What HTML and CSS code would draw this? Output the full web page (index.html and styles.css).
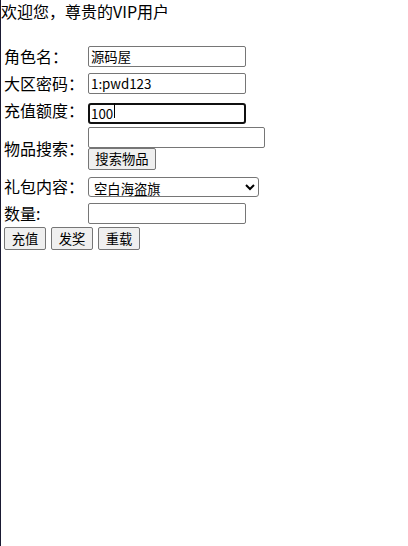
FILE: index.html
```html
<!DOCTYPE html>
<html lang="zh-CN">
<head>
<meta charset="utf-8">
<title>充值</title>
<link rel="stylesheet" href="styles.css">
</head>
<body>
<div class="welcome">欢迎您，尊贵的VIP用户</div>
<form class="form">
  <div class="row">
    <label class="label">角色名：</label>
    <input class="field" type="text" value="源码屋">
  </div>
  <div class="row">
    <label class="label">大区密码：</label>
    <input class="field" type="text" value="1:pwd123">
  </div>
  <div class="row">
    <label class="label">充值额度：</label>
    <span class="caret-wrap"><input class="field focused" type="text" value="100"><span class="caret"></span></span>
  </div>
  <div class="row row-search">
    <label class="label">物品搜索：</label>
    <div class="stack">
      <input class="field wide" type="text" value="">
      <button class="btn btn-search" type="button">搜索物品</button>
    </div>
  </div>
  <div class="row">
    <label class="label">礼包内容：</label>
    <select class="select"><option>空白海盗旗</option></select>
  </div>
  <div class="row">
    <label class="label">数量:</label>
    <input class="field" type="text" value="">
  </div>
  <div class="actions">
    <button class="btn btn-act" type="button">充值</button>
    <button class="btn btn-act" type="button">发奖</button>
    <button class="btn btn-act" type="button">重载</button>
  </div>
</form>
</body>
</html>
```
FILE: styles.css
```css
html, body {
  margin: 0;
  background: #fff;
}
body {
  box-sizing: border-box;
  min-height: 546px;
  border-left: 1px solid #1a1a33;
  font-family: "Noto Sans CJK SC", "Noto Sans", sans-serif;
  color: #000;
}
.welcome {
  font-size: 16px;
  line-height: 23px;
  height: 23px;
}
.form {
  margin: 20px 0 0 0;
  padding-left: 3px;
}
.row {
  display: flex;
  align-items: center;
  height: 27px;
}
.row-search {
  height: 49px;
}
.label {
  flex: none;
  width: 84px;
  font-size: 16px;
  line-height: 23px;
}
.field {
  box-sizing: border-box;
  width: 158px;
  height: 21px;
  margin: 0;
  padding: 0 2px;
  border: 1px solid #767676;
  border-radius: 2px;
  background: #fff;
  color: #000;
  font-family: "Noto Sans CJK SC", sans-serif;
  font-size: 13.33px;
  line-height: 19px;
  outline: none;
}
.wide {
  width: 177px;
}
.focused {
  border: 2px solid #101010;
  border-radius: 3px;
  padding: 0 1px;
}
.caret-wrap {
  position: relative;
  display: block;
  height: 21px;
}
.caret {
  position: absolute;
  left: 26px;
  top: 3px;
  width: 1px;
  height: 15px;
  background: #000;
}
.stack {
  display: flex;
  flex-direction: column;
  align-items: flex-start;
}
.btn {
  box-sizing: border-box;
  margin: 0;
  padding: 0 6px;
  border: 1px solid #767676;
  border-radius: 2px;
  background: #efefef;
  color: #000;
  font-family: "Noto Sans CJK SC", sans-serif;
  font-size: 13.33px;
  line-height: 18px;
}
.btn-search {
  width: 68px;
  height: 22px;
}
.select {
  box-sizing: border-box;
  width: 171px;
  height: 20px;
  margin: 0;
  padding: 0 0 0 1px;
  border: 1px solid #767676;
  border-radius: 3px;
  background: #fff;
  color: #000;
  font-family: "Noto Sans CJK SC", sans-serif;
  font-size: 13.33px;
}
.actions {
  display: flex;
  gap: 5px;
  height: 23px;
}
.btn-act {
  width: 42px;
  height: 23px;
}
```
